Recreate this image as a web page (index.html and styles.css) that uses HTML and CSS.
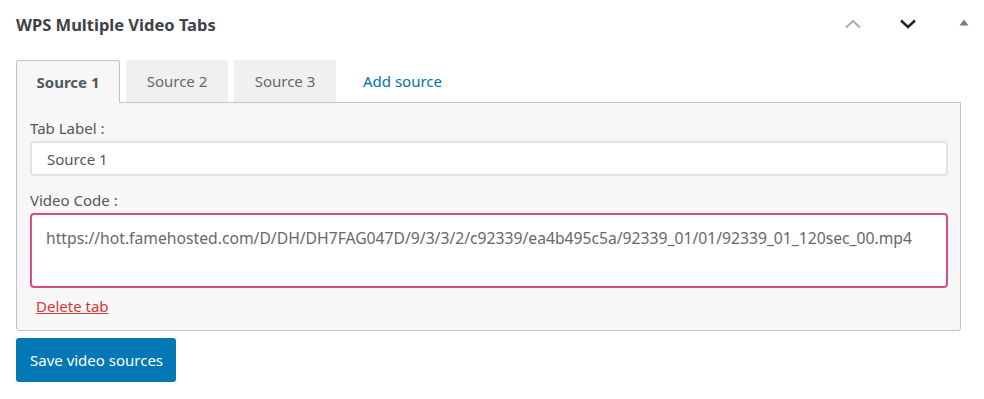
FILE: index.html
```html
<!DOCTYPE html>
<html lang="en">
<head>
<meta charset="UTF-8">
<meta name="viewport" content="width=device-width, initial-scale=1.0">
<title>WPS Multiple Video Tabs</title>
<link rel="stylesheet" href="styles.css">
</head>
<body>
<div class="postbox">
  <div class="postbox-header">
    <h2>WPS Multiple Video Tabs</h2>
    <div class="handle-actions">
      <button class="handle up" aria-label="Move up">
        <svg width="16" height="10" viewBox="0 0 16 10"><polyline points="1,8.5 8,2 15,8.5" fill="none" stroke="#a7aaad" stroke-width="2"/></svg>
      </button>
      <button class="handle down" aria-label="Move down">
        <svg width="16" height="10" viewBox="0 0 16 10"><polyline points="1,1.5 8,8 15,1.5" fill="none" stroke="#1d2327" stroke-width="2.4"/></svg>
      </button>
      <button class="handle toggle" aria-label="Toggle panel">
        <svg width="10" height="7" viewBox="0 0 10 7"><polygon points="0.5,6.5 5,0.5 9.5,6.5" fill="#787c82"/></svg>
      </button>
    </div>
  </div>

  <div class="video-tabs">
    <ul class="tab-nav">
      <li class="tab active">Source 1</li>
      <li class="tab">Source 2</li>
      <li class="tab">Source 3</li>
      <li class="tab add"><a href="#">Add source</a></li>
    </ul>

    <div class="tab-panel">
      <label class="field-label" for="tab-label">Tab Label :</label>
      <input type="text" id="tab-label" class="field-input" value="Source 1">

      <label class="field-label" for="video-code">Video Code :</label>
      <textarea id="video-code" class="field-textarea">https://hot.famehosted.com/D/DH/DH7FAG047D/9/3/3/2/c92339/ea4b495c5a/92339_01/01/92339_01_120sec_00.mp4</textarea>

      <a href="#" class="delete-tab">Delete tab</a>
    </div>

    <button class="save-button">Save video sources</button>
  </div>
</div>
</body>
</html>
```

FILE: styles.css
```css
body {
  margin: 0;
  padding: 0 16px;
  font-family: "Noto Sans", "Open Sans", sans-serif;
  font-size: 15px;
  color: #50575e;
  background-color: #fff;
}

.postbox-header {
  display: flex;
  align-items: center;
  justify-content: space-between;
  height: 48px;
}

.postbox-header h2 {
  margin: 0;
  font-size: 16.5px;
  font-weight: 700;
  color: #3c434a;
}

.handle-actions {
  display: flex;
  align-items: center;
  margin-right: -14px;
}

.handle {
  width: 36px;
  height: 36px;
  margin-left: 19px;
  padding: 0;
  border: none;
  background: none;
  display: flex;
  align-items: center;
  justify-content: center;
  cursor: pointer;
}

.handle.toggle {
  margin-left: 20px;
  padding-bottom: 4px;
}

.video-tabs {
  margin-top: 12px;
  margin-right: 7px;
}

.tab-nav {
  display: flex;
  gap: 6px;
  margin: 0;
  padding: 0;
  list-style: none;
  position: relative;
  z-index: 1;
}

.tab {
  width: 102px;
  height: 42px;
  box-sizing: border-box;
  display: flex;
  align-items: center;
  justify-content: center;
  background-color: #f0f0f1;
  border-radius: 3px 3px 0 0;
  color: #646970;
}

.tab.active {
  width: 104px;
  height: 43px;
  background-color: #f7f7f7;
  border: 1px solid #c3c4c7;
  border-bottom: none;
  font-weight: 700;
  color: #50575e;
}

.tab.add {
  width: auto;
  padding: 0 20px 0 21px;
  background: none;
}

.tab.add a {
  color: #0073aa;
  text-decoration: none;
}

.tab-panel {
  margin-top: -1px;
  padding: 15px 12px 14px 13px;
  background-color: #f7f7f7;
  border: 1px solid #c3c4c7;
  border-radius: 0 0 3px 3px;
  display: flex;
  flex-direction: column;
}

.field-label {
  line-height: 20px;
  margin-bottom: 3px;
}

.field-input {
  height: 35px;
  box-sizing: border-box;
  margin-bottom: 14px;
  padding: 0 15px;
  border: 2px solid #e3e3e3;
  border-radius: 4px;
  background-color: #fff;
  font-family: inherit;
  font-size: 15px;
  color: #50575e;
  outline: none;
}

.field-textarea {
  height: 75px;
  box-sizing: border-box;
  margin-bottom: 8px;
  padding: 13px 14px;
  border: 2px solid #dd4a8b;
  border-radius: 4px;
  background-color: #fff;
  font-family: inherit;
  font-size: 15.7px;
  line-height: 20px;
  color: #646970;
  resize: none;
  outline: none;
}

.delete-tab {
  align-self: flex-start;
  margin-left: 6px;
  line-height: 20px;
  color: #d63638;
}

.save-button {
  margin-top: 7px;
  height: 44px;
  padding: 0 13px 0 14px;
  border: none;
  border-radius: 3px;
  background-color: #0378b7;
  color: #fff;
  font-family: inherit;
  font-size: 15px;
  cursor: pointer;
}
```
